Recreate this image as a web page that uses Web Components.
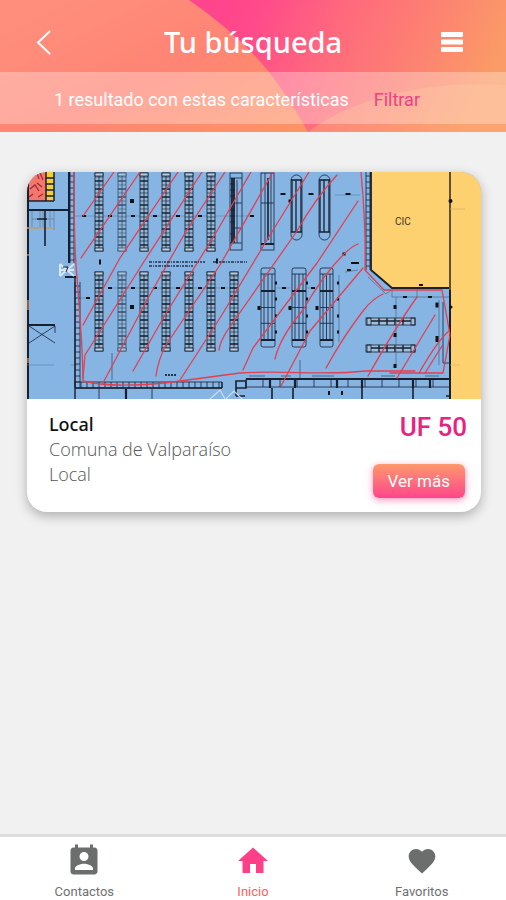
<!DOCTYPE html>
<html lang="es">
<head>
<meta charset="utf-8">
<meta name="viewport" content="width=device-width, initial-scale=1">
<title>Tu búsqueda</title>
<style>
html, body { margin: 0; background: #f1f1f1; font-family: Roboto, "Liberation Sans", sans-serif; }
</style>
</head>
<body>
<search-page></search-page>

<template id="t-page">
<style>
:host { display: flex; flex-direction: column; min-height: 100vh; }
main { flex: 1; padding: 40px 25px 40px 27px; }
</style>
<app-header>
  <span slot="title">Tu búsqueda</span>
  <span slot="summary">1 resultado con estas características</span>
</app-header>
<main>
  <property-card>
    <floor-plan slot="media"></floor-plan>
    <span slot="name">Local</span>
    <span slot="place">Comuna de Valparaíso</span>
    <span slot="kind">Local</span>
    <span slot="price">UF 50</span>
  </property-card>
</main>
<tab-bar></tab-bar>
</template>

<template id="t-header">
<style>
:host { display: grid; color: #fff; background: #ff8a74; padding-bottom: 8px; isolation: isolate; position: relative; overflow: hidden; }
.art { position: absolute; inset: 0; width: 100%; height: 100%; z-index: -1; }
.bar { display: grid; grid-template-columns: 1fr auto 1fr; align-items: center; padding: 12px 32px 0; height: 60px; }
h1 { margin: 0; font: 500 29px/40px "Noto Sans", "Open Sans", sans-serif; }
button { display: flex; padding: 0; border: 0; background: none; color: inherit; cursor: pointer; justify-self: start; }
h1 + button { justify-self: end; }
.sub { display: flex; align-items: center; justify-content: center; gap: 25px; box-sizing: border-box; height: 52px; padding: 4px 32px 0 0; background: rgba(255,255,255,.3); font-size: 18px; line-height: 24px; white-space: nowrap; }
a { color: #f23d86; text-decoration: none; }
</style>
<svg class="art" viewBox="0 0 506 132" preserveAspectRatio="none" aria-hidden="true">
  <defs>
    <linearGradient id="base" gradientUnits="userSpaceOnUse" x1="60" y1="0" x2="160" y2="200"><stop offset="0" stop-color="#ff8e7c"/><stop offset=".5" stop-color="#ff8474"/><stop offset="1" stop-color="#ff9464"/></linearGradient>
    <linearGradient id="blob" gradientUnits="userSpaceOnUse" x1="225" y1="10" x2="475" y2="120"><stop offset="0" stop-color="#ff458b"/><stop offset=".12" stop-color="#ff4b8a"/><stop offset=".4" stop-color="#ff697d"/><stop offset=".7" stop-color="#fd8172"/><stop offset="1" stop-color="#fb9c66"/></linearGradient>
  </defs>
  <path d="M0 0H506V132H0z" fill="url(#base)"/>
  <path d="M189 0C222 23 250 48 269 72C286 94 298 114 308 132H506V0z" fill="url(#blob)"/>
  <path d="M308 132C350 100 420 80 506 85V132z" fill="#ffb47c" opacity=".38"/>
</svg>
<div class="bar">
  <button type="button" aria-label="Volver"><svg width="24" height="28" viewBox="0 0 24 28" fill="none" stroke="#fff" stroke-width="2"><path d="M18 3L6 14.500L18 26"/></svg></button>
  <h1><slot name="title"></slot></h1>
  <button type="button" aria-label="Menú"><svg width="36" height="24" viewBox="0 0 36 24" fill="#fff"><rect x="3" y="2" width="22" height="5" rx="1"/><rect x="3" y="9.500" width="22" height="5" rx="1"/><rect x="3" y="17" width="22" height="5" rx="1"/></svg></button>
</div>
<div class="sub"><slot name="summary"></slot><a href="#filtrar">Filtrar</a></div>
</template>

<template id="t-card">
<style>
:host { display: block; background: #fff; border-radius: 20px; box-shadow: 0 4px 12px rgba(0,0,0,.28); }
.media { overflow: hidden; border-radius: 20px 20px 0 0; }
.body { display: flex; justify-content: space-between; padding: 13px 16px 14px 22px; font: 300 18px/25px "Open Sans", "Noto Sans", sans-serif; color: #555; }
h2, p { margin: 0; font: inherit; }
h2 { font: 500 18px/25px "Noto Sans", sans-serif; color: #111; }
.side { display: flex; flex-direction: column; align-items: flex-end; gap: 22px; }
.price { font: 500 26px/30px Roboto, sans-serif; color: #ea2083; margin-right: -2px; }
button { border: 0; border-radius: 6px; padding: 0 15px; height: 34px; font: 400 17px/34px Roboto, sans-serif; color: #fff; background: linear-gradient(#fd9a6c, #fe6f7c 50%, #fe468a); box-shadow: 0 2px 7px rgba(255,70,140,.6); cursor: pointer; }
</style>
<div class="media"><slot name="media"></slot></div>
<div class="body">
  <div><h2><slot name="name"></slot></h2><p><slot name="place"></slot></p><p><slot name="kind"></slot></p></div>
  <div class="side"><div class="price"><slot name="price"></slot></div><button type="button">Ver más</button></div>
</div>
</template>

<template id="t-tabs">
<style>
:host { display: block; border-top: 3px solid #ddd; background: #fff; }
nav { display: grid; grid-template-columns: repeat(3, 1fr); padding: 6px 0 0; }
</style>
<nav>
  <tab-item label="Contactos"><svg width="36" height="36" viewBox="0 0 24 24"><path d="M19 3h-1V1h-2v2H8V1H6v2H5c-1.110 0-2 .9-2 2v14c0 1.100.89 2 2 2h14c1.100 0 2-.9 2-2V5c0-1.100-.9-2-2-2zm-7 3c1.660 0 3 1.340 3 3s-1.340 3-3 3-3-1.340-3-3 1.340-3 3-3zm6 12H6v-1c0-2 4-3.100 6-3.100s6 1.100 6 3.100v1z"/></svg></tab-item>
  <tab-item label="Inicio" active><svg width="36" height="36" viewBox="0 0 24 24"><path d="M10 20v-6h4v6h5v-8h3L12 3 2 12h3v8z"/></svg></tab-item>
  <tab-item label="Favoritos"><svg width="32" height="32" viewBox="0 0 24 24"><path d="M12 21.350l-1.450-1.320C5.400 15.360 2 12.280 2 8.500 2 5.420 4.420 3 7.500 3c1.740 0 3.410.81 4.500 2.090C13.090 3.810 14.760 3 16.500 3 19.580 3 22 5.420 22 8.500c0 3.780-3.400 6.860-8.550 11.540L12 21.350z"/></svg></tab-item>
</nav>
</template>

<script>
const stamp = (el, id) => el.attachShadow({ mode: "open" }).append(document.getElementById(id).content.cloneNode(true));

customElements.define("app-header", class extends HTMLElement { constructor() { super(); stamp(this, "t-header"); } });
customElements.define("property-card", class extends HTMLElement { constructor() { super(); stamp(this, "t-card"); } });

customElements.define("tab-item", class extends HTMLElement {
  connectedCallback() {
    if (this.shadowRoot) return;
    const label = this.getAttribute("label");
    this.attachShadow({ mode: "open" }).innerHTML = `
      <style>
        :host { display: block; }
        a { display: flex; flex-direction: column; align-items: center; color: #707070; text-decoration: none; font: 400 13px/16px Roboto, sans-serif; }
        .icon { display: grid; place-items: center; height: 36px; margin-bottom: 5px; fill: #6c6e6e; }
        :host([active]) a { color: #ff6058; }
        :host([active]) .icon { fill: #ff4088; }
      </style>
      <a href="#${label.toLowerCase()}"><span class="icon"><slot></slot></span>${label}</a>`;
  }
});
customElements.define("tab-bar", class extends HTMLElement { constructor() { super(); stamp(this, "t-tabs"); } });

/* Floor plan of the premises: shelving, walls and the hatched rental area. */
customElements.define("floor-plan", class extends HTMLElement {
  constructor() {
    super();
    const rect = (x, y, w, h, extra = "") => `<rect x="${x}" y="${y}" width="${w}" height="${h}" ${extra}/>`;
    const dot = (x, y, w = 4, h = 2) => rect(x - w / 2, y - h / 2, w, h, 'fill="#111" stroke="none"');

    const shelf = (x, y, h, dim) => {
      let s = `<g opacity="${dim ? .65 : 1}">` + rect(x, y, 8, h, 'fill="#90b6d8"') + `<path d="M${x + 4} ${y + 3}V${y + h - 3}"/>`;
      for (let i = 1; i * 4 < h; i++) s += `<path d="M${x} ${y + i * 4}h8" stroke-width="${i % 2 ? .6 : 1.6}"/>`;
      return s + rect(x, y, 8, 3, 'fill="#b8cfe2"') + rect(x, y + h - 3, 8, 3, 'fill="#b8cfe2"') + "</g>";
    };
    const wide = (x, y, w, h) => rect(x, y, w, h, 'rx="2"') +
      `<path d="M${x + 3} ${y + 6}V${y + h - 6}M${x + w / 2} ${y + 6}V${y + h - 6}M${x + w - 3} ${y + 6}V${y + h - 6}M${x} ${y + 6}h${w}M${x} ${y + h / 2}h${w}M${x} ${y + h * .7}h${w}"/>` +
      `<path d="M${x} ${y + 23}h${w}M${x} ${y + h - 7}h${w}" stroke-width="1.800"/>`;
    const wallV = (x, y1, y2, w) => {
      let s = `<path d="M${x} ${y1}V${y2}M${x + w} ${y1}V${y2}"/>`;
      for (let y = y1 + 4; y < y2; y += 6) s += `<path d="M${x} ${y}h${w}"/>`;
      return s;
    };
    const wallH = (x1, x2, y, h, step = 6) => {
      let s = `<path d="M${x1} ${y}H${x2}M${x1} ${y + h}H${x2}"/>`;
      for (let x = x1; x < x2; x += step) s += `<path d="M${x} ${y}v${h}"/>`;
      return s;
    };

    const shelves = [[95], [118, 1], [140], [162], [185], [207]].map(([x, d]) => shelf(x, 173, 78, d)).join("") +
      [[95], [118, 1], [140], [162], [185], [207], [230]].map(([x, d]) => shelf(x, 272, 79, d)).join("");
    const wides = wide(261, 268, 14, 79) + wide(292, 268, 14, 79) + wide(320, 268, 13, 79) +
      rect(230, 173, 12, 77) + '<path d="M232 178V243M234 178V243" stroke-width="1.800"/><path d="M230 178h12M230 184h5M230 190h5M230 196h5M234 203h8M230 210h5M230 216h5M230 222h5M234 228h8M230 234h5M230 243h12M237 180V243"/>' +
      rect(261, 173, 13, 77) + '<path d="M265 173V244M271 173V244M261 203h13"/><path d="M261 244h13" stroke-width="2"/><path d="M268 178V240" stroke-width="1.600"/>' +
      [291, 319].map(x => rect(x, 175, 11, 65, 'rx="5.500"') + `<path d="M${x + 1} 180v52M${x + 5} 180v52M${x + 10} 180v52M${x} 180h11M${x} 232h11" stroke-width="1.300"/>`).join("");

    let marks = "";
    for (const x of [84, 110, 133, 155, 178, 200, 252]) marks += dot(x, 216);
    for (const x of [110, 133, 155, 178, 200, 223, 284, 313]) marks += dot(x, 288);
    for (const y of [283, 299, 316, 332]) for (const x of [276, 307, 338]) marks += dot(x, y, 2, 3);
    for (const x of [259, 290, 317]) marks += dot(x, 308, 3, 4);
    marks += dot(132, 201, 4, 4) + dot(132, 307, 4, 4) + dot(100, 262, 2, 5) + dot(88, 298) + dot(283, 194, 5) + dot(311, 194, 5) + dot(348, 194, 5) +
      dot(344, 254, 3, 3) + dot(349, 270) + dot(421, 285) + dot(395, 307, 3, 4) + dot(395, 335, 3, 4) + dot(395, 366, 3, 4) + dot(437, 305, 3, 5) + dot(437, 339, 3, 6) + dot(405, 297) + dot(430, 297) + dot(217, 261, 2, 5) + dot(355, 263, 8, 2) + dot(329, 393, 2, 4) + dot(342, 393, 2, 4) + dot(290, 201, 3, 3);

    const blocks = [318, 345].map(y => rect(366, y, 49, 7, 'fill="#a2bfda"') +
      rect(367, y, 4, 7) + rect(411, y, 4, 7) + `<path d="M371 ${y + 3}h40M379 ${y}v7M387 ${y}v7M395 ${y}v7M403 ${y}v7" stroke-width="1.400"/>`).join("");

    this.attachShadow({ mode: "open" }).innerHTML = `
<style>:host { display: block; } svg { display: block; width: 100%; height: auto; }</style>
<svg viewBox="27 172 454 227" role="img" aria-label="Plano del local">
  <rect x="27" y="172" width="454" height="227" fill="#86b5e4"/>
  <path d="M371 172H481V399H450V288H392L371 270z" fill="#fed170"/>
  <g fill="none" stroke="#17202e" stroke-width=".8">
    <path d="M27 172H54V201H27z" fill="#f4776e" stroke="none"/>
    <path d="M46 172H54V201H46z" fill="#f5cf38" stroke="none"/>
    <path d="M31 178l6-5 2 6M30 189l5-4 4 6M37 183l5 4M40 173l3 7M38 197l5-3M29 197l4-3" stroke="#9d2c34" stroke-width="1.300"/>
    <path d="M46 172V201M46 178h8M46 184h8M46 190h8M46 196h8M27 201H54M54 172V201" stroke-width="1.500"/>
    <path d="M28 172V399" stroke-width="2"/><path d="M27 210H69" stroke-width="1.800"/>
    <path d="M28 300v10M28 358v5M28 254v2" stroke="#c87744" stroke-width="1.500"/>
    <path d="M32 211v16M40 211v16M43 211v16M50 211v16M54 211v19M32 219H54" stroke="#67819a"/>
    <path d="M27 228H54" stroke="#bd9c77" stroke-width="1.400"/><path d="M45 210V246M37 219H47" stroke-width="1.600"/>
    <path d="M29 326l26 17M55 326L29 343M55 326v7"/><path d="M28 325H55" stroke-width="2"/>
    <path d="M27 365H54M70 365H78M75 216H250M80 298H88M110 288H230M276 288H290M307 288H318M335 195H360" stroke="#587da5" stroke-width=".6"/>
    <path d="M69 172V263M65 277H76" stroke-width="2"/>${wallV(70, 172, 263, 4)}
    <path d="M60 264l14 12M74 264L60 276M60 264v12M61 270h13" stroke="#d7e7f4" stroke-width="2"/><path d="M63 267h5l-2 5" stroke-width="1"/>
    ${wallV(75, 282, 387, 5)}<path d="M75 278V399" stroke-width="1.400"/>
    ${wallH(75, 222, 382, 6)}<path d="M75 388H222M222 382v6" stroke-width="1.500"/>
    <path d="M99 389v10M152 389v10"/><path d="M126 389v10" stroke-width="2.200"/>
    ${shelves}${wides}${blocks}
    ${wallV(366, 172, 270, 4)}<path d="M371 172V270L392 288H450" stroke-width="1.800"/>
    <path d="M368 277L386 294L391 290M392 290V297H450M396 297V365M417 289V297M339 275V342M345 272L358 270M439 300V365" stroke="#486889" stroke-width=".7"/>
    <path d="M450 172V399" stroke="#604f38" stroke-width="2"/><path d="M450 290V399" stroke-width="2"/>
    <path d="M443 302V363H449"/><path d="M450 209H465M450 365H460" stroke="#d3b364" stroke-width=".7"/>
    <circle cx="450.500" cy="201" r="2" fill="#111" stroke="none"/><circle cx="451" cy="307" r="1.500" fill="#111" stroke="none"/>
    ${wallH(246, 449, 379, 8, 17)}<path d="M246 379H449M270 379v9M295 379v9M337 379v9M362 379v9M413 379v9M430 379v9" stroke-width="2.200"/>
    <path d="M236 381h10v7h-10zM236 388v8M236 396h9M272 388v11M293 388v11M362 388v11M413 388v11M446 396h5" stroke-width="1.600"/>
    <path d="M210 399l10-9 5 9M226 399l8-8 8 8" stroke="#cee0f0" stroke-width="1.100"/>
    <path d="M249 376h16M281 376h10M312 376h22M381 376h14M425 376h14M112 353v27M300 360v18" stroke="#486889" stroke-width="1"/>
  </g>
  ${marks}
  <g fill="none" stroke="#e23f50" stroke-width="1.300" stroke-linecap="round" stroke-linejoin="round">
    <path d="M74 172C74 210 74 250 77 277C79 305 83 350 83 381C105 387 145 386 180 381L240 373C285 370 325 376 365 371H415"/>
    <path d="M361 172C364 205 366 235 365 270L384 290H442L450 335L443 373H390"/>
    <path d="M114 172L83 216M140 172L81 258M178 172L120 258L83 325M202 172L145 260L85 355L83 378M225 172L185 233L147 300L103 383M251 172L217 231L165 315L133 371M273 172L220 265L166 345Q158 360 156 376M309 172L270 235L220 318L180 380"/>
    <path d="M337 175Q315 199 297 231L227 331Q220 342 219 350M358 201L317 263L253 348L243 370M358 244Q352 246 343 255Q323 275 303 310Q280 337 275 359M363 268L310 331L281 386M383 294Q372 299 363 311Q343 337 326 368M417 297Q397 325 368 376M435 315L397 378M449 331Q438 340 419 373M442 346L425 373"/>
  </g>
  <text x="395" y="225" font-family="Roboto, sans-serif" font-size="10" fill="#3a3428">CIC</text>
  <g stroke="#203450" fill="none">
    <path d="M149 262H205M213 262H247M149 266H193" stroke-width="1.500" stroke-dasharray="3 1 1 1 2 1"/>
    <path d="M165 375h11" stroke-width="2" stroke-dasharray="2 1"/>
  </g>
</svg>`;
  }
});
customElements.define("search-page", class extends HTMLElement { constructor() { super(); stamp(this, "t-page"); } });
</script>
</body>
</html>
